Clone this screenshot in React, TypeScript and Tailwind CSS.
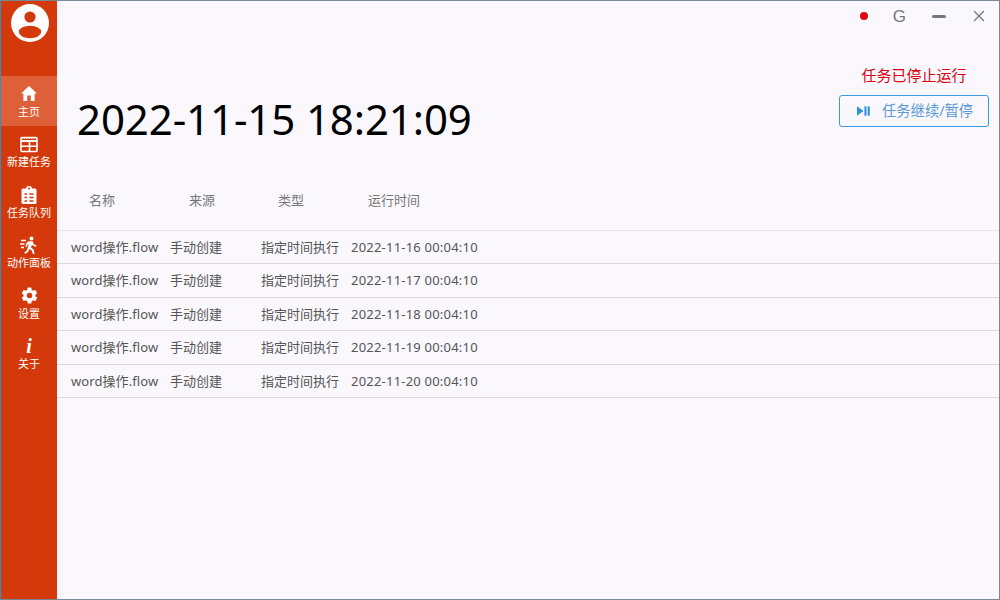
import React from "react";
import { X } from "lucide-react";

const font = "[font-family:'Noto_Sans','Noto_Sans_CJK_SC',sans-serif]";

function HomeIcon() {
  return (
    <svg width="18" height="18" viewBox="0 0 18 18" fill="white">
      <path d="M9 1 L17 8.6 H14.6 V16 H10.8 V10.6 H7.2 V16 H3.4 V8.6 H1 Z" />
    </svg>
  );
}
function TableIcon() {
  return (
    <svg width="18" height="17" viewBox="0 0 18 17" fill="none" stroke="white">
      <rect x="1" y="1.5" width="16" height="14" rx="1" strokeWidth="1.6" />
      <path d="M1 2H17" strokeWidth="1.5" strokeDasharray="1.5 1" />
      <path d="M1 5H17" strokeWidth="2" />
      <path d="M1 10.2H17M9.5 5V15" strokeWidth="1.6" />
    </svg>
  );
}
function ClipIcon() {
  return (
    <svg width="16" height="18" viewBox="0 0 16 18">
      <path fill="white" d="M2 2.5H5.2A2.8 2.4 0 0 1 10.8 2.5H14A1.5 1.5 0 0 1 15.5 4V16.5A1.5 1.5 0 0 1 14 18H2A1.5 1.5 0 0 1 .5 16.5V4A1.5 1.5 0 0 1 2 2.5Z" />
      <path stroke="#d3390a" strokeWidth="1.5" d="M3.5 8H6M3.5 11.5H6M3.5 15H6M8.5 8H12.5M8.5 11.5H12.5M8.5 15H12.5" />
      <circle cx="8" cy="2.6" r="1" fill="#d3390a" />
    </svg>
  );
}
function RunIcon() {
  return (
    <svg width="18" height="18" viewBox="0 0 18 18" fill="white">
      <circle cx="11.5" cy="2.4" r="2" />
      <path d="M8.4 5.2 L12.6 5.2 L14 8.4 L16.6 9.4 L16 10.8 L12.8 9.8 L12 8.4 L11 11.4 L13.6 13.4 L14.6 18 L12.8 18 L11.8 14.6 L9.4 13 L8.4 15.6 L5.2 18 L4.2 16.8 L6.8 14.6 L8.8 8 L7.6 8.6 L6.8 11 L5.4 10.6 L6.4 7 Z" />
      <path d="M1 4.5H6M0 8H4.5M1 11.5H4" stroke="white" strokeWidth="1.3" />
    </svg>
  );
}
function GearIcon() {
  return (
    <svg width="19" height="19" viewBox="0 0 24 24" fill="white">
      <path d="M19.4 13c.05-.33.1-.66.1-1s-.05-.67-.1-1l2.1-1.65c.2-.15.25-.42.12-.64l-2-3.46c-.12-.22-.39-.3-.61-.22l-2.49 1c-.52-.4-1.08-.73-1.69-.98l-.38-2.65A.49.49 0 0 0 14 2h-4a.49.49 0 0 0-.49.42l-.38 2.65c-.61.25-1.17.59-1.69.98l-2.49-1a.5.5 0 0 0-.61.22l-2 3.46c-.13.22-.07.49.12.64L4.57 11c-.04.33-.07.66-.07 1s.03.67.07 1l-2.11 1.65c-.19.15-.25.42-.12.64l2 3.46c.12.22.39.3.61.22l2.49-1c.52.4 1.08.73 1.69.98l.38 2.65c.03.24.24.42.49.42h4c.25 0 .46-.18.49-.42l.38-2.65c.61-.25 1.17-.59 1.69-.98l2.49 1c.23.09.49 0 .61-.22l2-3.46c.12-.22.07-.49-.12-.64L19.4 13ZM12 15.5a3.5 3.5 0 1 1 0-7 3.5 3.5 0 0 1 0 7Z" />
    </svg>
  );
}
function InfoIcon() {
  return (
    <span className="block h-[18px] text-[20px] leading-[18px] font-bold italic text-white [font-family:'Liberation_Serif',serif]">i</span>
  );
}

const nav = [
  { label: "主页", icon: <HomeIcon />, active: true },
  { label: "新建任务", icon: <TableIcon /> },
  { label: "任务队列", icon: <ClipIcon /> },
  { label: "动作面板", icon: <RunIcon /> },
  { label: "设置", icon: <GearIcon /> },
  { label: "关于", icon: <InfoIcon /> },
];

const days = ["16", "17", "18", "19", "20"];
const cols = "grid grid-cols-[99px_91px_90px_1fr]";

export default function App() {
  return (
    <div className={`${font} flex h-[600px] w-[1000px] overflow-hidden border border-[#7a8794] border-l-[#2f8fc4] bg-[#faf8fc]`}>
      <aside className="flex w-[56px] shrink-0 flex-col bg-[#d3390a]">
        <div className="flex h-[75px] justify-center">
          <svg width="38" height="38" viewBox="0 0 38 38" className="mt-[3px] ml-[1px]">
            <circle cx="19" cy="19" r="19" fill="white" />
            <circle cx="19" cy="13" r="5.6" fill="#d3390a" />
            <ellipse cx="19" cy="28" rx="11.2" ry="6.2" fill="#d3390a" />
          </svg>
        </div>
        {nav.map((n) => (
          <div
            key={n.label}
            className={`flex h-[50.4px] flex-col items-center pt-[9px] ${n.active ? "bg-[#dd6038]" : ""}`}
          >
            <div className="flex h-[18px] items-center justify-center">{n.icon}</div>
            <div className="mt-[1px] whitespace-nowrap text-[11px] leading-[16px] text-white">{n.label}</div>
          </div>
        ))}
      </aside>

      <main className="flex min-w-0 flex-1 flex-col">
        <div className="flex h-[30px] items-center justify-end pr-[11px] text-[#777]">
          <span className="mr-[25px] h-2 w-2 rounded-full bg-[#e60012]" />
          <span className="mr-[26px] text-[17px] leading-none [font-family:'Liberation_Sans',sans-serif]">G</span>
          <span className="mr-[24px] h-[3px] w-[14px] rounded-sm bg-[#777]" />
          <X size={18} strokeWidth={1.6} />
        </div>

        <div className="flex h-[168px] items-start justify-between">
          <div className="mt-[61px] ml-[20px] text-[42px] leading-[54px] tracking-[-0.11px] text-black">2022-11-15 18:21:09</div>
          <div className="mr-[10px] flex flex-col items-end">
            <div className="mt-[35px] w-[150px] text-center text-[15px] leading-[18px] text-[#d9000f]">任务已停止运行</div>
            <button className="mt-[11px] flex h-[32px] w-[150px] items-center gap-[12px] rounded-[3px] border border-[#3a9ae0] bg-transparent pl-[17px] text-[14.3px] text-[#5a9ad6]">
              <svg width="13" height="10" viewBox="0 0 14 10" fill="#2f8fdd">
                <path d="M0 0 L7 5 L0 10 Z" />
                <rect x="8" y="0" width="2.2" height="10" />
                <rect x="11.5" y="0" width="2.2" height="10" />
              </svg>
              <span>任务继续/暂停</span>
            </button>
          </div>
        </div>

        <div className="grid h-[32px] grid-cols-[100px_89px_90px_1fr] items-start border-b border-[#e6e5e8] pl-[32px] text-[13px] leading-[18px] text-[#777]">
          <div className="-mt-[8px]">名称</div>
          <div className="-mt-[8px]">来源</div>
          <div className="-mt-[8px]">类型</div>
          <div className="-mt-[8px]">运行时间</div>
        </div>
        {days.map((d) => (
          <div
            key={d}
            className={`${cols} h-[33.4px] items-center border-b border-[#d9d9dc] pt-[1px] pl-[14px] text-[13px] text-[#555]`}
          >
            <div className="whitespace-nowrap tracking-[0.08px]">word操作.flow</div>
            <div>手动创建</div>
            <div>指定时间执行</div>
            <div className="tracking-[0.21px]">2022-11-{d} 00:04:10</div>
          </div>
        ))}
      </main>
    </div>
  );
}
